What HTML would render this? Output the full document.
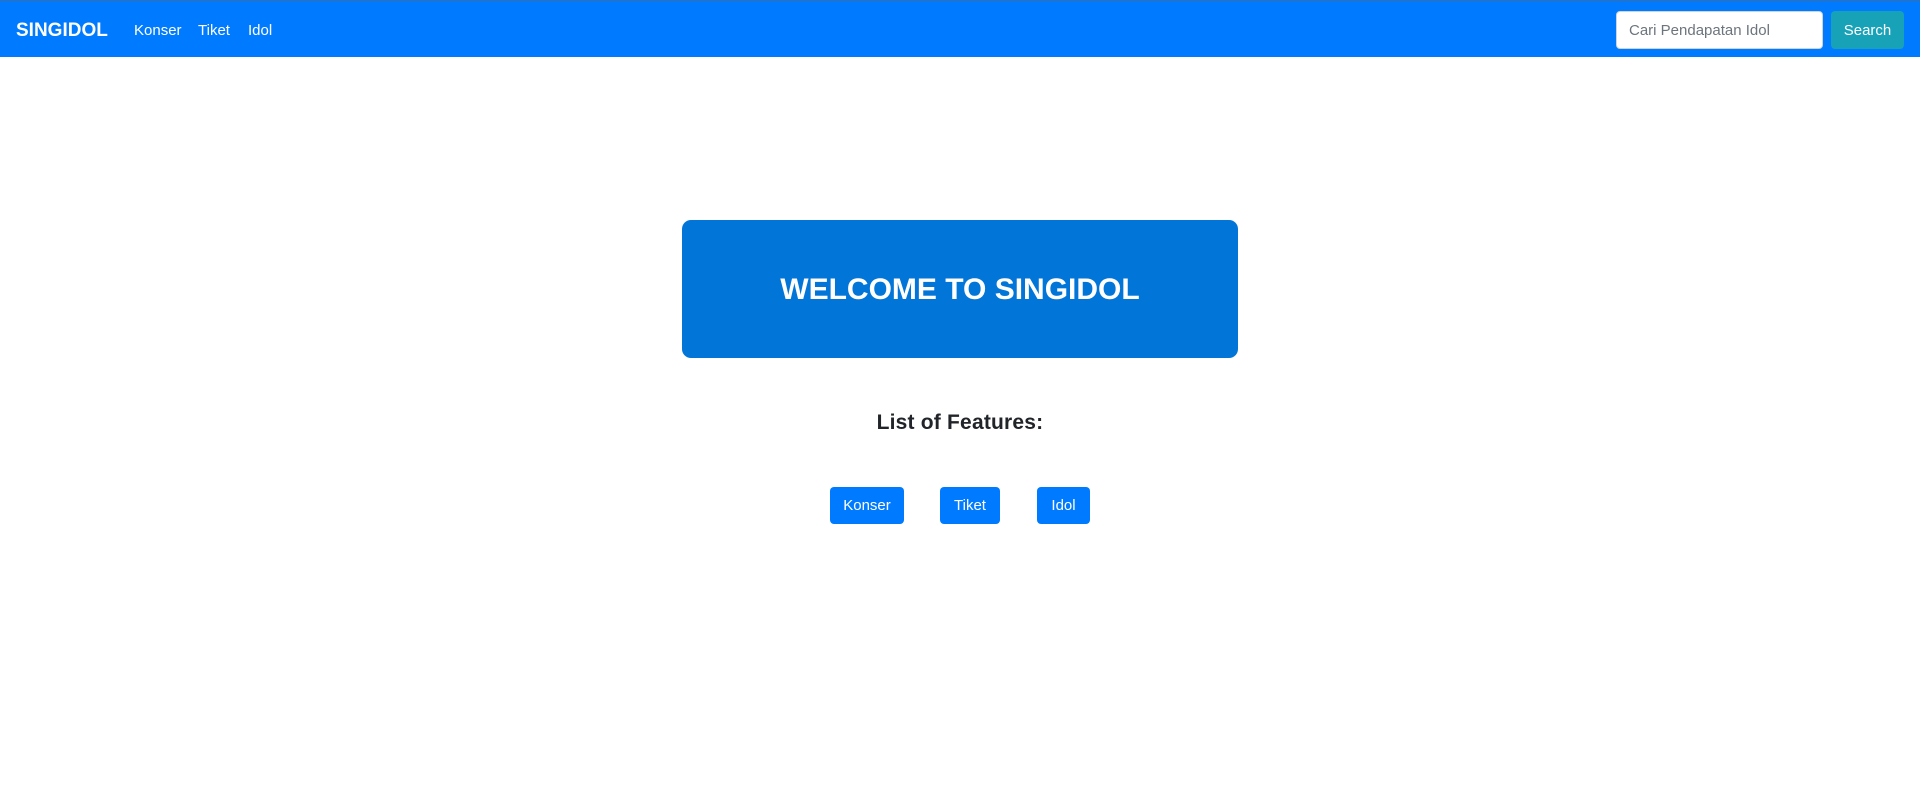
<!DOCTYPE html>
<html><head><meta charset="utf-8"><style>
*{margin:0;padding:0;box-sizing:border-box}
body{width:1920px;height:790px;background:#fff;font-family:"Liberation Sans",sans-serif;position:relative;overflow:hidden}
.nav{position:absolute;left:0;top:0;width:1920px;height:57px;background:#007bff;border-top:1px solid #3a6ea8}
.a{position:absolute;color:#fff;white-space:nowrap}
.brand{left:16px;top:19px;font-size:19px;font-weight:bold}
.l{top:21px;font-size:15px}
.inp{position:absolute;left:1616px;top:10px;width:207px;height:38px;background:#fff;border:1px solid #ced4da;border-radius:4px;color:#6c757d;font-size:15px;padding:10px 12px}
.sb{position:absolute;left:1831px;top:10px;width:73px;height:38px;background:#17a2b8;border-radius:4px;color:#fff;font-size:15px;text-align:center;line-height:39px}
.jb{position:absolute;left:682px;top:220px;width:556px;height:138px;background:#0275d8;border-radius:9px;color:#fff;font-size:30px;font-weight:bold;text-align:center;line-height:140px}
.h{position:absolute;left:0;width:1920px;top:411px;text-align:center;font-size:21px;color:#212529;font-weight:bold;letter-spacing:0.2px}
.b{position:absolute;top:487px;height:37px;background:#007bff;color:#fff;border-radius:4px;font-size:15px;text-align:center;line-height:38px}
</style></head><body>
<div class="nav">
<div class="a brand">SINGIDOL</div>
<div class="a l" style="left:134px">Konser</div>
<div class="a l" style="left:198px">Tiket</div>
<div class="a l" style="left:248px">Idol</div>
<div class="inp">Cari Pendapatan Idol</div>
<div class="sb">Search</div>
</div>
<div class="jb">WELCOME TO SINGIDOL</div>
<div class="h">List of Features:</div>
<div class="b" style="left:830px;width:74px">Konser</div>
<div class="b" style="left:940px;width:60px">Tiket</div>
<div class="b" style="left:1037px;width:53px">Idol</div>
</body></html>
